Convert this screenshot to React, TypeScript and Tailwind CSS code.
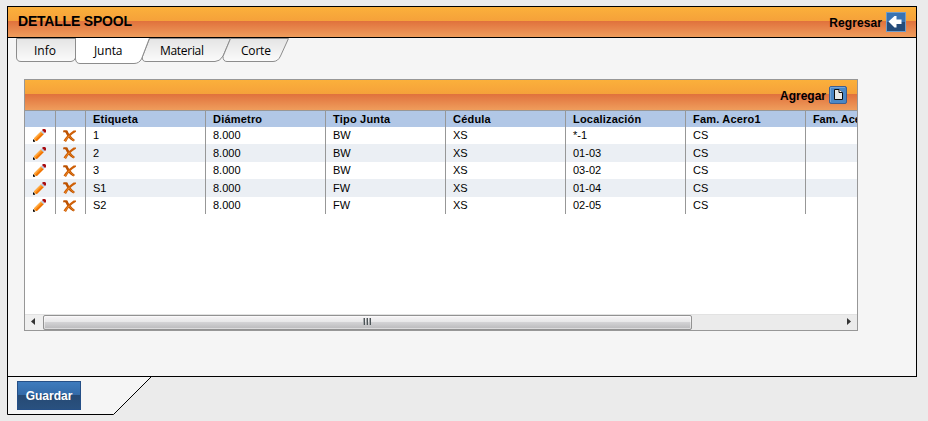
import React from "react";

const columns = ["Etiqueta", "Diámetro", "Tipo Junta", "Cédula", "Localización", "Fam. Acero1", "Fam. Acero2"];

const rows = [
  ["1", "8.000", "BW", "XS", "*-1", "CS", ""],
  ["2", "8.000", "BW", "XS", "01-03", "CS", ""],
  ["3", "8.000", "BW", "XS", "03-02", "CS", ""],
  ["S1", "8.000", "FW", "XS", "01-04", "CS", ""],
  ["S2", "8.000", "FW", "XS", "02-05", "CS", ""],
];

const orange =
  "bg-[linear-gradient(to_bottom,#fbb03b_0px,#f5a13a_14px,#e0713c_14px,#ef9d5c_100%)]";

function Pencil() {
  return (
    <svg className="block" width="13" height="13" viewBox="0 0 13 13">
      <path d="M1 9.2 L7.8 2.4 L10.6 5.2 L3.8 12 L1 12Z" fill="#fb8c14" />
      <path d="M2.8 11 L9.8 4.2 L10.6 5.2 L3.8 12Z" fill="#f07000" />
      <path d="M1.2 9.6 L8 2.6 L8.6 3.2 L2 10.2Z" fill="#ffb04e" />
      <path d="M0.8 9.8 L3.3 12.2 L0.6 12.5Z" fill="#ecc9a0" />
      <path d="M0 10.5h1v1h1v1.2H0Z" fill="#000" />
      <path d="M7.8 2.4 L9.2 1.2 L11.8 3.8 L10.6 5.2Z" fill="#b9c7dc" />
      <path d="M9 1 L10 0 H12 L13 1 V3 L12 4Z" fill="#a80d12" />
    </svg>
  );
}

function Cross() {
  return (
    <svg className="block" width="13" height="12" viewBox="0 0 13 12">
      <path d="M0.2 0.6 C1.6 0 3.2 0 4.4 .6 C5.6 3.8 8.2 7.1 12 10 L10.4 11.6 C6.6 9.6 4 6.4 2.6 2.8 C2 2.2 1.2 2.2 .2 2.4Z" fill="#bd5200" />
      <path d="M13 0.4 L10.6 0.4 C6.6 3 2.8 6.6 0.5 10.6 L3 12 C4.8 8.3 8 4.5 13 1.8Z" fill="#cf6008" />
      <path d="M6.5 6.2 C8 8 9.4 9.4 11 10.6 M2.2 11 C3.4 8.9 4.8 7 6.3 5.6" stroke="#ee8a25" strokeWidth=".9" fill="none" />
    </svg>
  );
}

function TabStrip() {
  return (
    <div className="relative h-[26px] w-[274px] font-['Open_Sans','Noto_Sans',sans-serif] text-[12px] leading-[26px]">
      <svg className="absolute left-0 top-0" width="274" height="27" viewBox="0 0 274 27">
        <defs>
          <linearGradient id="tab" x1="0" y1="0" x2="0" y2="1">
            <stop offset="0" stopColor="#e4e4e4" />
            <stop offset="1" stopColor="#fbfbfb" />
          </linearGradient>
        </defs>
        <g stroke="#8c8c8c">
          <path d="M.5 .5 V19 Q.5 23.5 5 23.5 H55 Q58 23.5 59.5 20 V.5Z" fill="url(#tab)" />
          <path d="M133.5 .5 L126.3 19 Q126 23.5 130 23.5 H199 Q204 23.5 207 18 L214.5 .5Z" fill="url(#tab)" />
          <path d="M214.5 .5 L207 18.5 Q207 23.5 211 23.5 H257 Q262 23.5 264.5 18 L272.5 .5Z" fill="url(#tab)" />
          <path d="M59.5 0 V21 Q60 25.5 64 25.5 H118 Q123 25.5 125.5 21 L133.5 0" fill="#fff" />
        </g>
      </svg>
      <div className="relative flex text-black">
        <span className="w-[49px] pl-[18px]">Info</span>
        <span className="w-[95px] pl-[29px] tracking-[-0.1px]">Junta</span>
        <span className="w-[81px] tracking-[-0.3px]">Material</span>
        <span className="tracking-[-0.2px]">Corte</span>
      </div>
    </div>
  );
}

function ScrollBar() {
  return (
    <div className="flex h-4 items-center border-t border-[#e2e2e2] bg-[#ebebeb]">
      <div className="flex h-full w-[18px] items-center justify-center bg-[#efefef] pb-[2px] pr-[2px]">
        <svg width="4" height="7" viewBox="0 0 4 7"><path d="M4 0v7L0 3.5Z" fill="#333" /></svg>
      </div>
      <div className="mb-px flex h-[15px] w-[649px] items-center justify-center rounded-[2px] border border-[#929292] bg-[linear-gradient(to_bottom,#f7f5f7_0%,#e6e6e7_48%,#d2d2d4_50%,#b9b9bb_100%)] pb-px pr-px shadow-[inset_0_0_0_1px_#ffffff77]">
        <svg width="9" height="7" viewBox="0 0 9 7">
          <path d="M1 0h1v7H1zM4 0h1v7H4zM7 0h1v7H7z" fill="#4c5457" />
          <path d="M0 0h1v7H0zM3 0h1v7H3zM6 0h1v7H6z" fill="#a5a8aa" />
        </svg>
      </div>
      <div className="flex h-full flex-1 items-center justify-end pb-[2px] pr-[6px]">
        <svg width="4" height="7" viewBox="0 0 4 7"><path d="M0 0v7L4 3.5Z" fill="#333" /></svg>
      </div>
    </div>
  );
}

function Grid() {
  return (
    <div className="flex h-[252px] w-[834px] flex-col border border-[#979797] bg-white">
      <div className={`flex h-[31px] items-center justify-end border-b border-[#979797] pr-[10px] ${orange}`}>
        <span className="mr-[3px] pt-px text-[12px] font-bold">Agregar</span>
        <svg width="18" height="18" viewBox="0 0 18 18">
          <rect x=".5" y=".5" width="17" height="17" rx="1.5" fill="#4b87c5" stroke="#3e5f91" />
          <path d="M1.5 16V1.5H16" stroke="#75a5d5" fill="none" />
          <path d="M5.5 3.5H10L13.5 7V13.5H5.5Z" fill="#e9e9e7" stroke="#0d0d0d" />
          <path d="M10 3.5V6.5H13.5" stroke="#0d0d0d" fill="#fff" />
        </svg>
      </div>
      <div className="flex-1 overflow-hidden">
        <table className="w-[901px] table-fixed border-collapse text-[11px] leading-[16px]">
          <colgroup>
            <col className="w-[31px]" />
            <col className="w-[30px]" />
            {columns.map((c) => <col key={c} className="w-[120px]" />)}
          </colgroup>
          <thead>
            <tr className="h-4 bg-[#b1c7e6]">
              <th className="p-0 shadow-[inset_-1px_0_0_#979797]" />
              <th className="p-0 shadow-[inset_-1px_0_0_#979797]" />
              {columns.map((c, i) => (
                <th
                  key={c}
                  className={`whitespace-nowrap py-0 pl-[7px] pr-0 text-left font-bold shadow-[inset_-1px_0_0_#979797] ${i === 6 ? "tracking-[-0.1px]" : "tracking-[0.2px]"}`}
                >
                  {c}
                </th>
              ))}
            </tr>
          </thead>
          <tbody>
            {rows.map((row, i) => (
              <tr key={row[0]} className={i % 2 ? "h-[18px] bg-[#ebeff4]" : "h-[17px] bg-white"}>
                <td className="p-0 pl-2 align-middle shadow-[inset_-1px_0_0_#979797]"><Pencil /></td>
                <td className="p-0 pl-[7px] align-middle shadow-[inset_-1px_0_0_#979797]"><Cross /></td>
                {row.map((value, j) => (
                  <td
                    key={j}
                    className={`pl-[7px] pr-0 pt-0 shadow-[inset_-1px_0_0_#979797] ${i % 2 ? "pb-0 align-middle" : "pb-px align-top"}`}
                  >
                    {value}
                  </td>
                ))}
              </tr>
            ))}
          </tbody>
        </table>
      </div>
      <ScrollBar />
    </div>
  );
}

export default function App() {
  return (
    <div className="h-[421px] w-[928px] overflow-hidden bg-[#ebebeb] pl-[7px] pt-[6px] font-['Liberation_Sans',Arial,sans-serif] text-black">
      <div className="h-[371px] w-[910px] border border-black bg-[#f5f5f5]">
        <div className={`flex h-[31px] items-center justify-between border-b border-black pl-[10px] pr-[10px] ${orange}`}>
          <h1 className="pb-px text-[14px] font-bold tracking-[-0.2px]">DETALLE SPOOL</h1>
          <div className="flex items-center">
            <span className="mr-[4px] pt-px text-[12px] font-bold tracking-[0.1px]">Regresar</span>
            <svg width="20" height="20" viewBox="0 0 20 20">
              <defs>
                <linearGradient id="back" x1="0" y1="0" x2="0" y2="1">
                  <stop offset=".5" stopColor="#3973b2" />
                  <stop offset=".5" stopColor="#254c7a" />
                </linearGradient>
              </defs>
              <rect x=".5" y=".5" width="19" height="19" fill="url(#back)" stroke="#6f9cc9" />
              <path d="M2.5 9.5 L8.5 4 H10.5 V7.5 H15.5 V12 H10.5 V15.5 H8.5Z" fill="#fff" />
            </svg>
          </div>
        </div>
        <div className="pl-2"><TabStrip /></div>
        <div className="pl-4 pt-[15px]"><Grid /></div>
      </div>
      <div className="relative h-[38px] w-[145px]">
        <svg className="absolute left-0 top-0" width="145" height="38" viewBox="0 0 145 38">
          <path d="M.5 0V37.5H106.5L144 0Z" fill="#f5f5f5" />
          <path d="M.5 0V37.5H106.5L144 0" fill="none" stroke="#000" />
        </svg>
        <div className="relative pl-[10px] pt-1">
          <button className="h-[29px] w-16 border border-[#254f86] bg-[linear-gradient(to_bottom,#3e7bbd_0px,#336aa8_13px,#264a74_13px,#29517f_100%)] text-[12px] font-bold text-white">Guardar</button>
        </div>
      </div>
    </div>
  );
}
